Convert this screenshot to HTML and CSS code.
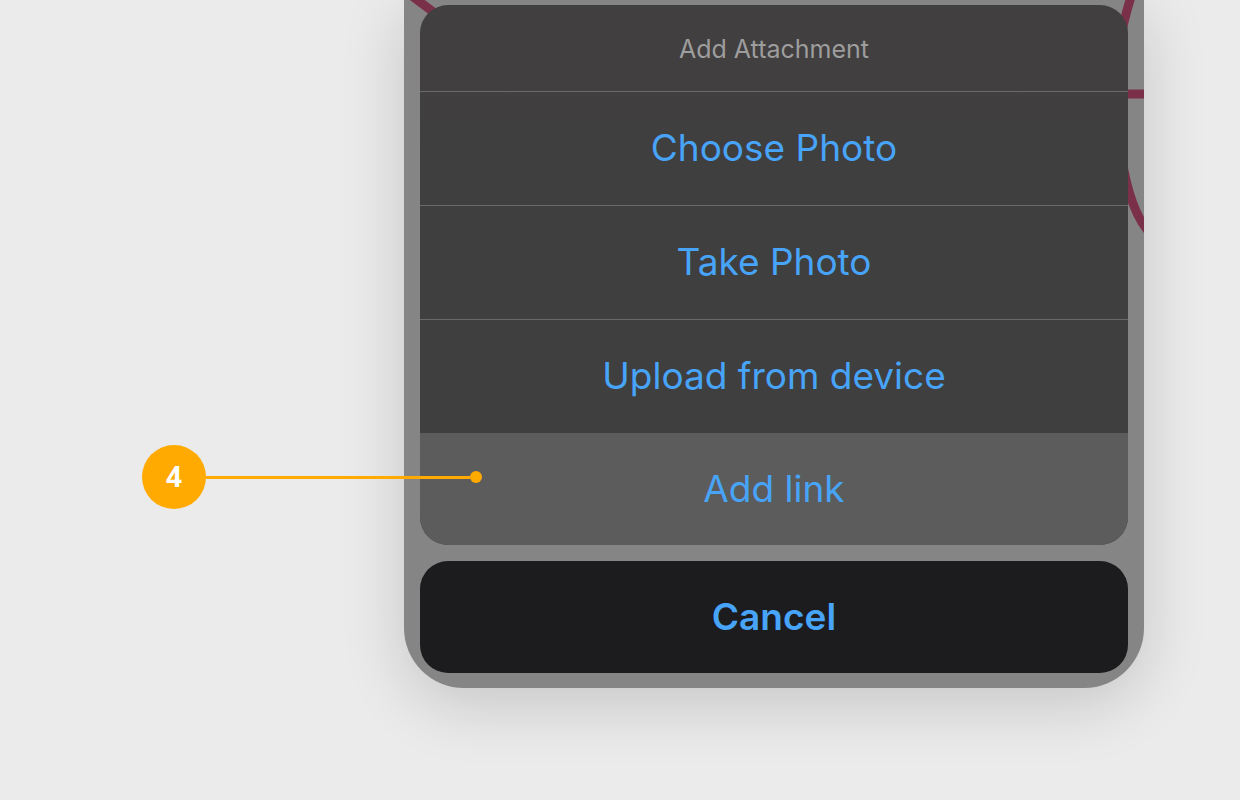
FILE: index.html
```html
<!doctype html>
<html lang="en">
    <head>
        <meta charset="UTF-8" />
        <meta name="viewport" content="width=device-width, initial-scale=1.0" />
        <title>Add Attachment</title>
        <link rel="stylesheet" href="styles.css">
    </head>
    <body>
        <main class="stage">
            <div class="phone">
                <!-- map lines behind the sheet -->
                <svg class="map" width="740" height="260" viewBox="0 0 740 260" aria-hidden="true">
                    <path d="M4 -7 L40 20" />
                    <path d="M728 -6 Q721 14 714 50 L714 130 Q722 208 746 233" />
                    <path d="M716 94 H744" />
                </svg>
                <div class="sheet">
                    <h1 class="sheet-title">Add Attachment</h1>
                    <button class="action" type="button">Choose Photo</button>
                    <button class="action" type="button">Take Photo</button>
                    <button class="action" type="button">Upload from device</button>
                    <button class="action active" type="button">Add link</button>
                </div>
                <button class="cancel" type="button">Cancel</button>
            </div>
            <div class="callout">
                <span class="number">4</span>
                <span class="line"></span>
                <span class="dot"></span>
            </div>
        </main>
    </body>
</html>
```

FILE: styles.css
```css
* {
    box-sizing: border-box;
}
body {
    margin: 0;
    background: #ebebeb;
    font-family: Inter, "Liberation Sans", sans-serif;
}
.stage {
    position: relative;
    min-height: 100vh;
    padding: 0 96px 112px 404px;
    overflow: hidden;
}
.phone {
    position: relative;
    display: flex;
    flex-direction: column;
    gap: 16px;
    padding: 5px 16px 15px;
    border-radius: 0 0 60px 60px;
    background: #858585;
    box-shadow: 0 16px 64px rgba(0, 0, 0, 0.16);
}
.map {
    position: absolute;
    top: 0;
    right: 0;
    fill: none;
    stroke: #7b3049;
    stroke-width: 9;
}
.sheet {
    position: relative;
    overflow: hidden;
    border-radius: 28px;
    background: linear-gradient(#423f40, #3f3f3f 40%);
}
.sheet-title {
    margin: 0;
    padding: 29px 0 27px;
    color: #9d9d9d;
    font-size: 25px;
    font-weight: 400;
    line-height: 30px;
    text-align: center;
}
.action,
.cancel {
    display: block;
    width: 100%;
    margin: 0;
    border: 0;
    color: #48a4f8;
    font-family: inherit;
    font-size: 37px;
    line-height: 48px;
    text-align: center;
    cursor: pointer;
}
.action {
    padding: 32px 0 33px;
    border-top: 1px solid #6b696a;
    background: transparent;
}
.action.active {
    padding: 32px 0;
    border-top: 0;
    background: #5c5c5c;
}
.cancel {
    position: relative;
    padding: 32px 0;
    border-radius: 28px;
    background: #1c1c1e;
    font-weight: 600;
}
.callout {
    position: absolute;
    top: 445px;
    left: 142px;
    display: flex;
    align-items: center;
    width: 340px;
}
.number {
    width: 64px;
    height: 64px;
    border-radius: 50%;
    background: #ffaa00;
    color: #fff;
    font-family: "Noto Sans", sans-serif;
    font-size: 28px;
    font-weight: 700;
    line-height: 62px;
    text-align: center;
}
.line {
    flex: 1;
    height: 3px;
    background: #ffaa00;
}
.dot {
    width: 12px;
    height: 12px;
    border-radius: 50%;
    background: #ffaa00;
}
```
